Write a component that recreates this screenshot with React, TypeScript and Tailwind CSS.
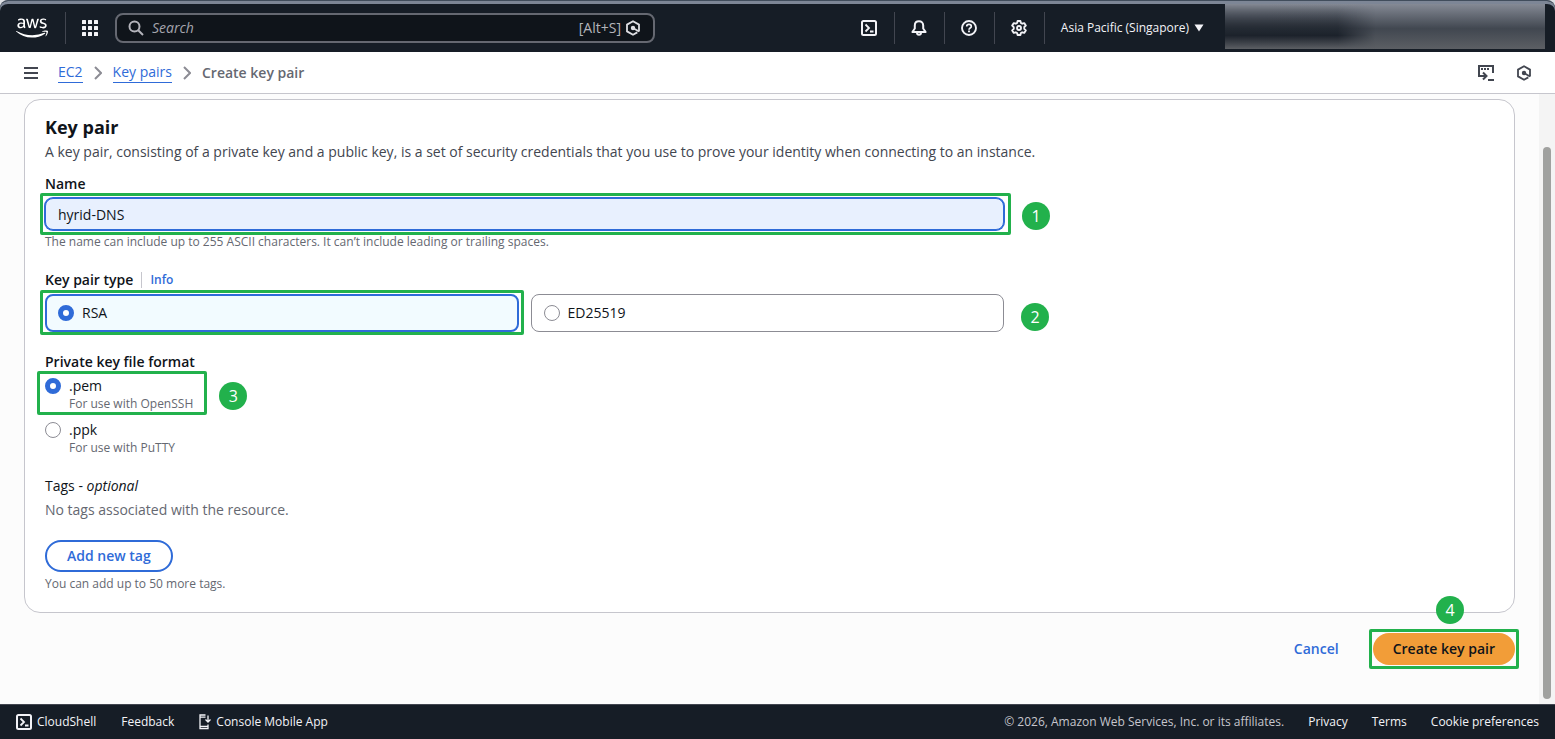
import { useState } from 'react';
import type { ReactNode } from 'react';
import { FaAws } from 'react-icons/fa';

type IconProps = { className?: string };

function SearchIcon({ className }: IconProps) {
  return (
    <svg className={className} viewBox="0 0 16 16" fill="none" stroke="currentColor" strokeWidth={2} aria-hidden="true">
      <circle cx="6.5" cy="6.5" r="5" />
      <path d="M10.2 10.2 15 15" />
    </svg>
  );
}

function HexIcon({ className }: IconProps) {
  return (
    <svg className={className} viewBox="0 0 16 16" fill="none" stroke="currentColor" strokeWidth={1.8} aria-hidden="true">
      <path d="M14 11.5V4.6L8 1.2 2 4.6v6.8l6 3.400 4.300-2.400" />
      <path d="M8 8l6 3.500" />
      <circle cx="8" cy="8" r="1.300" fill="currentColor" />
    </svg>
  );
}

function AppsIcon({ className }: IconProps) {
  return (
    <svg className={className} viewBox="0 0 16 16" fill="currentColor" aria-hidden="true">
      {[0, 6, 12].map((y) => [0, 6, 12].map((x) => <rect key={`${x}-${y}`} x={x} y={y} width="4" height="4" rx="0.5" />))}
    </svg>
  );
}

function ShellIcon({ className }: IconProps) {
  return (
    <svg className={className} viewBox="0 0 16 16" fill="none" stroke="currentColor" strokeWidth={2} aria-hidden="true">
      <rect x="1" y="1" width="14" height="14" rx="1.5" />
      <path d="M4.5 4.5 8 8l-3.5 3.5M9 11.5h3.5" strokeWidth={1.8} />
    </svg>
  );
}

function BellIcon({ className }: IconProps) {
  return (
    <svg className={className} viewBox="0 0 16 16" fill="none" stroke="currentColor" strokeWidth={2} strokeLinejoin="round" aria-hidden="true">
      <path d="M8 1.2c-2.5 0-4.2 1.8-4.2 4.2v3.1L1.4 12h13.2l-2.4-3.5V5.4C12.2 3 10.5 1.2 8 1.2Z" />
      <path d="M6 12.5c0 1.3.8 2.3 2 2.3s2-1 2-2.3" />
    </svg>
  );
}

function HelpIcon({ className }: IconProps) {
  return (
    <svg className={className} viewBox="0 0 16 16" fill="none" stroke="currentColor" strokeWidth={1.9} aria-hidden="true">
      <circle cx="8" cy="8" r="7" />
      <path d="M5.7 6.5C5.7 5.2 6.7 4.4 8 4.4s2.3.8 2.3 2c0 1.6-2.3 1.7-2.3 3.3" strokeWidth={1.7} />
      <path d="M8 10.6v1.6" />
    </svg>
  );
}

function GearIcon({ className }: IconProps) {
  return (
    <svg className={className} viewBox="0 0 16 16" fill="none" stroke="currentColor" strokeWidth={1.9} strokeLinejoin="round" aria-hidden="true">
      <path d="M6.6 1h2.8l.5 2 1.3.7 2-.6 1.6 2.5-1.5 1.4v1.9l1.5 1.5-1.6 2.5-2-.6-1.3.7-.5 2H6.6l-.5-2-1.3-.7-2 .6-1.6-2.5 1.5-1.5V7.1L1.2 5.6l1.6-2.5 2 .6L6.1 3Z" />
      <circle cx="8" cy="8" r="2" />
    </svg>
  );
}

function DockIcon({ className }: IconProps) {
  return (
    <svg className={className} viewBox="0 0 16 16" fill="none" stroke="currentColor" strokeWidth={2} aria-hidden="true">
      <path d="M15 8V1H1v10h7" />
      <path d="M5 7.5 8.5 11 5 14.5" />
      <path d="M10 15h6" />
      <path d="M3 4h2M6 4h2M9 4h2" />
    </svg>
  );
}

function MobileIcon({ className }: IconProps) {
  return (
    <svg className={className} viewBox="0 0 12 16" fill="none" stroke="currentColor" strokeWidth={1.3} aria-hidden="true">
      <path d="M6.5 1H1v13.5h8V10.5M1 3.2h5.5M1 12.3h8" />
      <path d="M9 1.5v6.5M6.5 5.5 9 8l2.500-2.500" />
    </svg>
  );
}

function Chevron() {
  return (
    <svg className="h-4 w-2 text-[#8c8c94]" viewBox="0 0 8 16" fill="none" stroke="currentColor" strokeWidth={2} aria-hidden="true">
      <path d="M1 2l6 6-6 6" />
    </svg>
  );
}

function Step({ n, className }: { n: number; className: string }) {
  return (
    <span className={`absolute flex size-7 items-center justify-center rounded-full bg-[#22b14c] text-base text-white ${className}`}>
      {n}
    </span>
  );
}

function Frame({ className }: { className: string }) {
  return <span className={`pointer-events-none absolute rounded-xs border-3 border-[#22b14c] ${className}`} />;
}

function Radio({ name, id, checked, onChange }: { name: string; id: string; checked: boolean; onChange: () => void }) {
  return (
    <input
      type="radio"
      name={name}
      id={id}
      checked={checked}
      onChange={onChange}
      className="size-4 shrink-0 appearance-none rounded-full border border-[#8c8c94] bg-white checked:border-5 checked:border-[#2f6bd8]"
    />
  );
}

function NavButton({ label, children }: { label: string; children: ReactNode }) {
  return (
    <button type="button" aria-label={label} className="flex h-8 w-[50px] items-center justify-center border-r border-[#424650]">
      {children}
    </button>
  );
}

export default function App() {
  const [name, setName] = useState('hyrid-DNS');
  const [keyType, setKeyType] = useState<'rsa' | 'ed25519'>('rsa');
  const [format, setFormat] = useState<'pem' | 'ppk'>('pem');

  return (
    <div className="flex min-h-screen flex-col bg-[#fcfcfc] font-['Open_Sans','Noto_Sans',sans-serif] text-sm leading-5 text-[#0f141a]">
      {/* Top navigation */}
      <div className="bg-[#dfe1e5]">
        <header className="flex h-[52px] items-center overflow-hidden rounded-t-lg border-t border-[#414d5c] bg-[#161d26] text-[#f3f3f7] shadow-[inset_0_3px_0_#7d8696]">
          <a href="#home" aria-label="AWS home" className="mt-[3px] flex h-8 w-[66px] items-center border-r border-[#424650] pl-4 text-white">
            <FaAws className="h-[26px] w-8" />
          </a>
          <button type="button" aria-label="Services" className="mt-[3px] pr-[17px] pl-4">
            <AppsIcon className="size-4" />
          </button>
          <div className="mt-[3px] flex h-[30px] w-[540px] items-center rounded-lg border-2 border-[#656871] bg-[#0f141a] pr-3 pl-[11px] text-[#b4b4bb]">
            <SearchIcon className="size-4 shrink-0" />
            <input type="text" aria-label="Search" placeholder="Search" className="min-w-0 flex-1 bg-transparent px-2 outline-none placeholder:text-[#a4a4ad] placeholder:italic" />
            <span>[Alt+S]</span>
            <HexIcon className="ml-1 size-4 text-[#dedee3]" />
          </div>
          <div className="mt-[3px] ml-auto flex items-center">
            <NavButton label="CloudShell"><ShellIcon className="size-4" /></NavButton>
            <NavButton label="Notifications"><BellIcon className="size-4" /></NavButton>
            <NavButton label="Help"><HelpIcon className="size-4" /></NavButton>
            <NavButton label="Settings"><GearIcon className="size-4" /></NavButton>
            <button type="button" className="flex items-center gap-1 pr-5 pl-4 text-xs font-medium whitespace-nowrap">
              Asia Pacific (Singapore)
              <svg className="size-3" viewBox="0 0 12 12" fill="currentColor" aria-hidden="true"><path d="M1.500 2.500h9L6 9.500Z" /></svg>
            </button>
          </div>
          {/* account details, obscured */}
          <div className="mt-[3px] mr-[10px] h-[45px] w-80 self-start bg-linear-to-b from-[#858a95] via-[#414750] via-55% to-[#5c5f64]">
            <div className="h-full w-[150px] bg-linear-to-b from-transparent via-[#1c222b] via-70% to-[#5c5f64] mask-r-from-75%" />
          </div>
        </header>
      </div>

      {/* Breadcrumbs */}
      <div className="flex h-[42px] items-center justify-between border-b border-[#c6c6cd] bg-white pr-[23px] pl-6">
        <div className="flex items-center">
          <button type="button" aria-label="Open navigation" className="mr-5 text-[#424650]">
            <svg className="block h-3 w-[14px]" viewBox="0 0 14 12" fill="currentColor" aria-hidden="true">
              <path d="M0 0h14v2H0zM0 5h14v2H0zM0 10h14v2H0z" />
            </svg>
          </button>
          <nav aria-label="Breadcrumb" className="flex items-center gap-[11px]">
            <a href="#ec2" className="border-b border-[#2f6bd8] text-[#2f6bd8]">EC2</a>
            <Chevron />
            <a href="#key-pairs" className="border-b border-[#2f6bd8] text-[#2f6bd8]">Key pairs</a>
            <Chevron />
            <span className="font-semibold text-[#656871]">Create key pair</span>
          </nav>
        </div>
        <div className="flex items-center gap-[22px] text-[#424650]">
          <button type="button" aria-label="Dock panel"><DockIcon className="size-4" /></button>
          <button type="button" aria-label="Assistant"><HexIcon className="size-4" /></button>
        </div>
      </div>

      <div className="flex flex-1">
        <main className="flex-1 px-6 pt-[5px]">
          <section className="rounded-2xl border border-[#c6c6cd] bg-white px-5 pt-4 pb-5">
            <h2 className="text-lg leading-[22px] font-bold">Key pair</h2>
            <p className="mt-1 text-[#424650]">
              A key pair, consisting of a private key and a public key, is a set of security credentials that you use to prove your identity when connecting to an instance.
            </p>

            <div className="mt-3 max-w-[959px]">
              <label htmlFor="name" className="block font-semibold">Name</label>
              <div className="relative mt-1">
                <input
                  id="name"
                  type="text"
                  value={name}
                  onChange={(e) => setName(e.target.value)}
                  className="block h-8 w-full rounded-lg border border-[#2f6bd8] bg-[#e8f0fe] px-3 ring-1 ring-[#2f6bd8] outline-none"
                />
                <Frame className="-top-[5px] -right-[7px] -bottom-[5px] -left-[5px]" />
                <Step n={1} className="top-1 -right-[46px]" />
              </div>
              <p className="mt-1 text-xs leading-4 text-[#656871]">The name can include up to 255 ASCII characters. It can’t include leading or trailing spaces.</p>
            </div>

            <fieldset className="mt-5 max-w-[959px]">
              <legend className="flex items-center font-semibold">
                Key pair type
                <a href="#info" className="ml-2 border-l border-[#c6c6cd] pl-2 text-xs leading-4 text-[#2f6bd8]">Info</a>
              </legend>
              <div className="relative mt-1 grid grid-cols-2 gap-3">
                <div className="relative">
                  <label htmlFor="rsa" className="flex h-[38px] items-center gap-2 rounded-lg border-2 border-[#2f6bd8] bg-[#f2fbff] px-[11px]">
                    <Radio name="key-type" id="rsa" checked={keyType === 'rsa'} onChange={() => setKeyType('rsa')} />
                    RSA
                  </label>
                  <Frame className="-inset-x-[5px] -top-1 -bottom-[3px]" />
                </div>
                <label htmlFor="ed25519" className="flex h-[38px] items-center gap-2 rounded-lg border border-[#8c8c94] px-3">
                  <Radio name="key-type" id="ed25519" checked={keyType === 'ed25519'} onChange={() => setKeyType('ed25519')} />
                  ED25519
                </label>
                <Step n={2} className="top-[9px] -right-[45px]" />
              </div>
            </fieldset>

            <fieldset className="mt-5">
              <legend className="font-semibold">Private key file format</legend>
              <div className="mt-1 flex flex-col items-start gap-2">
                <div className="relative flex gap-2 pr-[6px]">
                  <span className="flex h-5 items-center">
                    <Radio name="format" id="pem" checked={format === 'pem'} onChange={() => setFormat('pem')} />
                  </span>
                  <label htmlFor="pem">
                    .pem
                    <span className="block text-xs leading-4 text-[#656871]">For use with OpenSSH</span>
                  </label>
                  <Frame className="-inset-x-2 -top-[5px] -bottom-[3px]" />
                  <Step n={3} className="top-[6px] -right-12" />
                </div>
                <div className="flex gap-2">
                  <span className="flex h-5 items-center">
                    <Radio name="format" id="ppk" checked={format === 'ppk'} onChange={() => setFormat('ppk')} />
                  </span>
                  <label htmlFor="ppk">
                    .ppk
                    <span className="block text-xs leading-4 text-[#656871]">For use with PuTTY</span>
                  </label>
                </div>
              </div>
            </fieldset>

            <h3 className="mt-5">Tags - <em>optional</em></h3>
            <p className="mt-1 text-[#656871]">No tags associated with the resource.</p>
            <button type="button" className="mt-5 block h-8 rounded-full border-2 border-[#2f6bd8] bg-white px-5 font-semibold text-[#2f6bd8]">Add new tag</button>
            <p className="mt-1 text-xs leading-4 text-[#656871]">You can add up to 50 more tags.</p>
          </section>

          <div className="mt-5 flex items-center justify-end gap-[34px]">
            <a href="#cancel" className="font-semibold text-[#2f6bd8]">Cancel</a>
            <div className="relative">
              <button type="button" className="block h-8 rounded-full bg-[#f29d38] px-5 font-semibold">Create key pair</button>
              <Frame className="-inset-x-1 -inset-y-1" />
              <Step n={4} className="-top-[37px] right-[51px]" />
            </div>
          </div>
        </main>
        <div className="flex w-4 justify-center bg-[#f4f4f4] pt-[53px] pb-[5px]">
          <div className="w-2 rounded-full bg-[#a0a19f]" />
        </div>
      </div>

      <footer className="flex h-[35px] items-center justify-between border-t border-[#424650] bg-[#161d26] px-4 text-xs font-medium text-[#f3f3f7]">
        <div className="flex items-center gap-[25px]">
          <a href="#cloudshell" className="flex items-center gap-[5px]"><ShellIcon className="size-4" />CloudShell</a>
          <a href="#feedback">Feedback</a>
          <a href="#mobile" className="flex items-center gap-[5px]"><MobileIcon className="h-4 w-3" />Console Mobile App</a>
        </div>
        <div className="flex items-center gap-6">
          <span className="font-normal text-[#c6c6cd]">© 2026, Amazon Web Services, Inc. or its affiliates.</span>
          <a href="#privacy">Privacy</a>
          <a href="#terms">Terms</a>
          <a href="#cookies">Cookie preferences</a>
        </div>
      </footer>
    </div>
  );
}
